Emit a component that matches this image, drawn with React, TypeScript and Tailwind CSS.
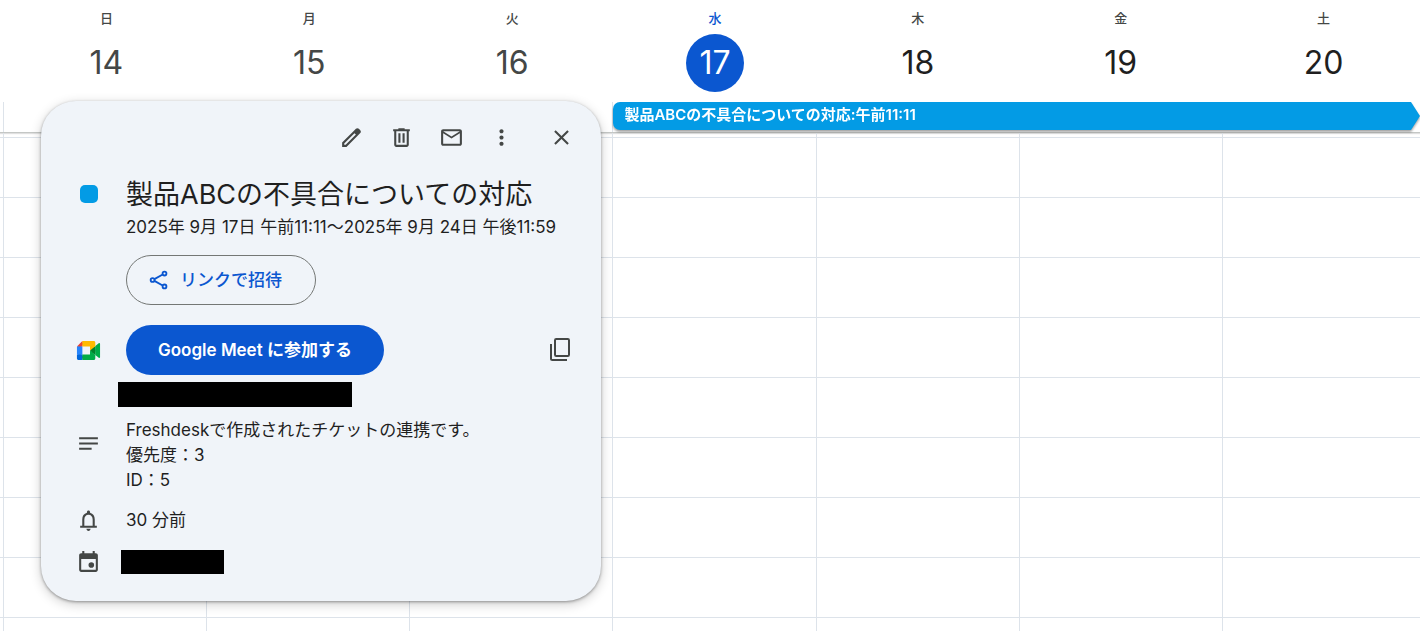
import type { ReactNode } from "react";

type Day = { label: string; date: number; tone: "past" | "today" | "future" };

const days: Day[] = [
  { label: "日", date: 14, tone: "past" },
  { label: "月", date: 15, tone: "past" },
  { label: "火", date: 16, tone: "past" },
  { label: "水", date: 17, tone: "today" },
  { label: "木", date: 18, tone: "future" },
  { label: "金", date: 19, tone: "future" },
  { label: "土", date: 20, tone: "future" },
];

const hours = [0, 1, 2, 3, 4, 5, 6, 7, 8];

const labelTone = {
  past: "text-[#444746]",
  today: "text-[#0b57d0]",
  future: "text-[#444746]",
};

const dateTone = {
  past: "text-[#444746]",
  today: "bg-[#0b57d0] text-white",
  future: "text-[#1f1f1f]",
};

const icons = {
  edit: "M20.41 4.94l-1.35-1.35c-.78-.78-2.05-.78-2.83 0L13.4 6.41 3 16.82V21h4.18l10.46-10.46 2.77-2.77c.79-.78.79-2.05 0-2.83zm-14 14.12L5 19v-1.36l9.82-9.82 1.41 1.41-9.82 9.83z",
  trash:
    "M7 21c-1.1 0-2-.9-2-2V6H4V4h5V3h6v1h5v2h-1v13c0 1.1-.9 2-2 2H7zM17 6H7v13h10V6zM9 17h2V8H9v9zm4 0h2V8h-2v9z",
  mail: "M22 6c0-1.1-.9-2-2-2H4c-1.1 0-2 .9-2 2v12c0 1.1.9 2 2 2h16c1.1 0 2-.9 2-2V6zm-2 0l-8 5-8-5h16zm0 12H4V8l8 5 8-5v10z",
  more: "M12 8c1.1 0 2-.9 2-2s-.9-2-2-2-2 .9-2 2 .9 2 2 2zm0 2c-1.1 0-2 .9-2 2s.9 2 2 2 2-.9 2-2-.9-2-2-2zm0 6c-1.1 0-2 .9-2 2s.9 2 2 2 2-.9 2-2-.9-2-2-2z",
  close:
    "M19 6.41L17.59 5 12 10.59 6.41 5 5 6.41 10.59 12 5 17.59 6.41 19 12 13.41 17.59 19 19 17.59 13.41 12z",
  notes: "M3 18h12v-2H3v2zM3 6v2h18V6H3zm0 7h18v-2H3v2z",
  bell: "M18 17v-6c0-3.07-1.63-5.64-4.5-6.32V4c0-.83-.67-1.5-1.5-1.5s-1.5.67-1.5 1.5v.68C7.64 5.36 6 7.92 6 11v6H4v2h16v-2h-2zm-2 0H8v-6c0-2.48 1.51-4.5 4-4.5s4 2.02 4 4.5v6zm-4 5c1.1 0 2-.9 2-2h-4c0 1.1.9 2 2 2z",
  calendar:
    "M19 4h-1V2h-2v2H8V2H6v2H5c-1.11 0-1.99.9-1.99 2L3 20c0 1.1.89 2 2 2h14c1.1 0 2-.9 2-2V6c0-1.1-.9-2-2-2zm0 16H5V9.5h14V20zM14.7 18a2.7 2.7 0 1 0 0-5.4 2.7 2.7 0 0 0 0 5.4z",
};

function Icon({ name }: { name: keyof typeof icons }) {
  return (
    <svg viewBox="0 0 24 24" className="size-[25px] shrink-0" fill="currentColor" aria-hidden="true">
      <path d={icons[name]} />
    </svg>
  );
}

function ShareIcon() {
  return (
    <svg viewBox="0 0 24 24" className="size-[22px] shrink-0" fill="none" stroke="currentColor" strokeWidth="2" aria-hidden="true">
      <circle cx="18" cy="5" r="2.1" />
      <circle cx="5" cy="12" r="2.1" />
      <circle cx="18" cy="19" r="2.1" />
      <path d="M7 11 16 6M7 13l9 5" />
    </svg>
  );
}

function CopyIcon() {
  return (
    <svg viewBox="0 0 21 24" className="h-6 w-[21px]" fill="none" stroke="currentColor" strokeWidth="2" aria-hidden="true">
      <rect x="5" y="1" width="14" height="17" rx="1.2" />
      <path d="M1 6v15c0 .8.5 1 1.3 1H17" />
    </svg>
  );
}

function MeetLogo() {
  return (
    <svg viewBox="0 0 87.5 72" className="h-[19px] w-[25px] shrink-0" aria-hidden="true">
      <path fill="#00832d" d="M49.5 36l8.53 9.75 11.47 7.33 2-17.02-2-16.64-11.69 6.44z" />
      <path fill="#0066da" d="M0 51.5V66c0 3.315 2.685 6 6 6h14.5l3-10.96-3-9.54-9.95-3z" />
      <path fill="#e94235" d="M20.5 0L0 20.5l10.55 3 9.95-3 2.95-9.41z" />
      <path fill="#2684fc" d="M20.5 20.5H0v31h20.5z" />
      <path
        fill="#00ac47"
        d="M82.6 8.68L69.5 19.42v33.66l13.16 10.79c1.97 1.54 4.85.135 4.85-2.37V11c0-2.535-2.945-3.925-4.91-2.32zM49.5 36v15.5h-29V72h43c3.315 0 6-2.685 6-6V53.08z"
      />
      <path fill="#ffba00" d="M63.5 0h-43v20.5h29V36l20-16.57V6c0-3.315-2.685-6-6-6z" />
    </svg>
  );
}

function ToolButton({ label, children }: { label: string; children: ReactNode }) {
  return (
    <button type="button" aria-label={label} className="flex size-[50px] items-center justify-center rounded-full hover:bg-black/5">
      {children}
    </button>
  );
}

function WeekHeader() {
  return (
    <header className="-mr-[5px] grid grid-cols-7 pt-2 pb-[9px] pl-[5px]">
      {days.map((day) => (
        <div key={day.date} className="flex flex-col items-center gap-[6px]">
          <span className={`text-[13px] leading-5 font-medium ${labelTone[day.tone]}`}>{day.label}</span>
          <button
            type="button"
            className={`flex size-[58px] items-center justify-center rounded-full text-[32px] leading-none ${dateTone[day.tone]}`}
          >
            {day.date}
          </button>
        </div>
      ))}
    </header>
  );
}

function AllDayRow() {
  return (
    <div className="-mr-[5px] mt-px grid grid-cols-7 border-b border-[#c4c7c5] pl-[3px] shadow-[0_1px_1px_rgba(0,0,0,0.12)]">
      <div className="h-[30px] border-l border-[#dde3ea]" />
      <div className="border-l border-[#dde3ea]" />
      <div className="border-l border-[#dde3ea]" />
      <div className="col-span-4 border-l border-[#dde3ea] pr-[5px]">
        <a
          href="#event"
          className="flex h-7 drop-shadow-[0_2px_1px_rgba(0,0,0,0.35)]"
        >
          <span className="flex-1 rounded-l-[7px] bg-[#039be5] pl-[11px] text-[15px] leading-[26px] font-semibold text-white">
            製品ABCの不具合についての対応:午前11:11
          </span>
          <svg viewBox="0 0 9 28" className="h-7 w-[9px]" fill="#039be5" aria-hidden="true">
            <path d="M0 0 9 14 0 28z" />
          </svg>
        </a>
      </div>
    </div>
  );
}

function HourGrid() {
  return (
    <div className="-mr-[5px]">
      <div className="grid h-1 grid-cols-7 pl-[3px]">
        {days.map((day) => (
          <div key={day.date} className="border-l border-[#dde3ea]" />
        ))}
      </div>
      {hours.map((hour) => (
        <div key={hour} className="grid h-[60px] grid-cols-7 border-t border-[#dde3ea] pl-[3px]">
          {days.map((day) => (
            <div key={day.date} className="border-l border-[#dde3ea]" />
          ))}
        </div>
      ))}
    </div>
  );
}

function EventDialog() {
  return (
    <section
      role="dialog"
      aria-labelledby="event-title"
      className="absolute top-[101px] left-[41px] w-[560px] rounded-[35px] bg-[#f0f4f9] pt-[11px] pb-[27px] text-[17px] leading-[25px] text-[#1f1f1f] shadow-[0_1px_3px_rgba(0,0,0,0.35),0_3px_12px_rgba(0,0,0,0.2)]"
    >
      <div className="flex justify-end pr-[15px] text-[#444746]">
        <ToolButton label="編集"><Icon name="edit" /></ToolButton>
        <ToolButton label="削除"><Icon name="trash" /></ToolButton>
        <ToolButton label="メール"><Icon name="mail" /></ToolButton>
        <ToolButton label="オプション"><Icon name="more" /></ToolButton>
        <div className="pl-[10px]">
          <ToolButton label="閉じる"><Icon name="close" /></ToolButton>
        </div>
      </div>

      <div className="flex gap-[25px] pt-[13px] pl-[35px]">
        <div className="flex h-[38px] w-[25px] shrink-0 items-center justify-center">
          <span className="size-[18px] rounded-[5px] bg-[#039be5]" />
        </div>
        <div>
          <h1 id="event-title" className="text-[27px] leading-10">製品ABCの不具合についての対応</h1>
          <p>2025年 9月 17日 午前11:11〜2025年 9月 24日 午後11:59</p>
          <button
            type="button"
            className="mt-[15px] flex h-[50px] w-[190px] items-center gap-[10px] rounded-full border border-[#747775] pl-[21px] font-medium text-[#0b57d0]"
          >
            <ShareIcon />
            リンクで招待
          </button>
        </div>
      </div>

      <div className="flex items-center gap-[25px] pt-5 pr-4 pl-[35px]">
        <MeetLogo />
        <button
          type="button"
          className="h-[50px] w-[258px] rounded-full bg-[#0b57d0] font-semibold text-white"
        >
          Google Meet に参加する
        </button>
        <div className="ml-auto text-[#444746]">
          <ToolButton label="会議リンクをコピー"><CopyIcon /></ToolButton>
        </div>
      </div>
      <div className="mt-[7px] ml-[77px] h-[25px] w-[234px] bg-black" />

      <div className="flex gap-[25px] pt-[11px] pl-[35px]">
        <div className="flex h-[50px] items-center text-[#444746]"><Icon name="notes" /></div>
        <p>
          Freshdeskで作成されたチケットの連携です。
          <br />
          優先度：3
          <br />
          ID：5
        </p>
      </div>

      <div className="flex items-center gap-[25px] pt-[15px] pl-[35px]">
        <span className="text-[#444746]"><Icon name="bell" /></span>
        <p>30 分前</p>
      </div>

      <div className="flex items-center gap-5 pt-4 pl-[35px]">
        <span className="text-[#444746]"><Icon name="calendar" /></span>
        <div className="h-6 w-[103px] bg-black" />
      </div>
    </section>
  );
}

export default function App() {
  return (
    <main className="relative h-screen overflow-hidden bg-white font-[Inter,'Noto_Sans_CJK_JP',sans-serif]">
      <WeekHeader />
      <AllDayRow />
      <HourGrid />
      <EventDialog />
    </main>
  );
}
